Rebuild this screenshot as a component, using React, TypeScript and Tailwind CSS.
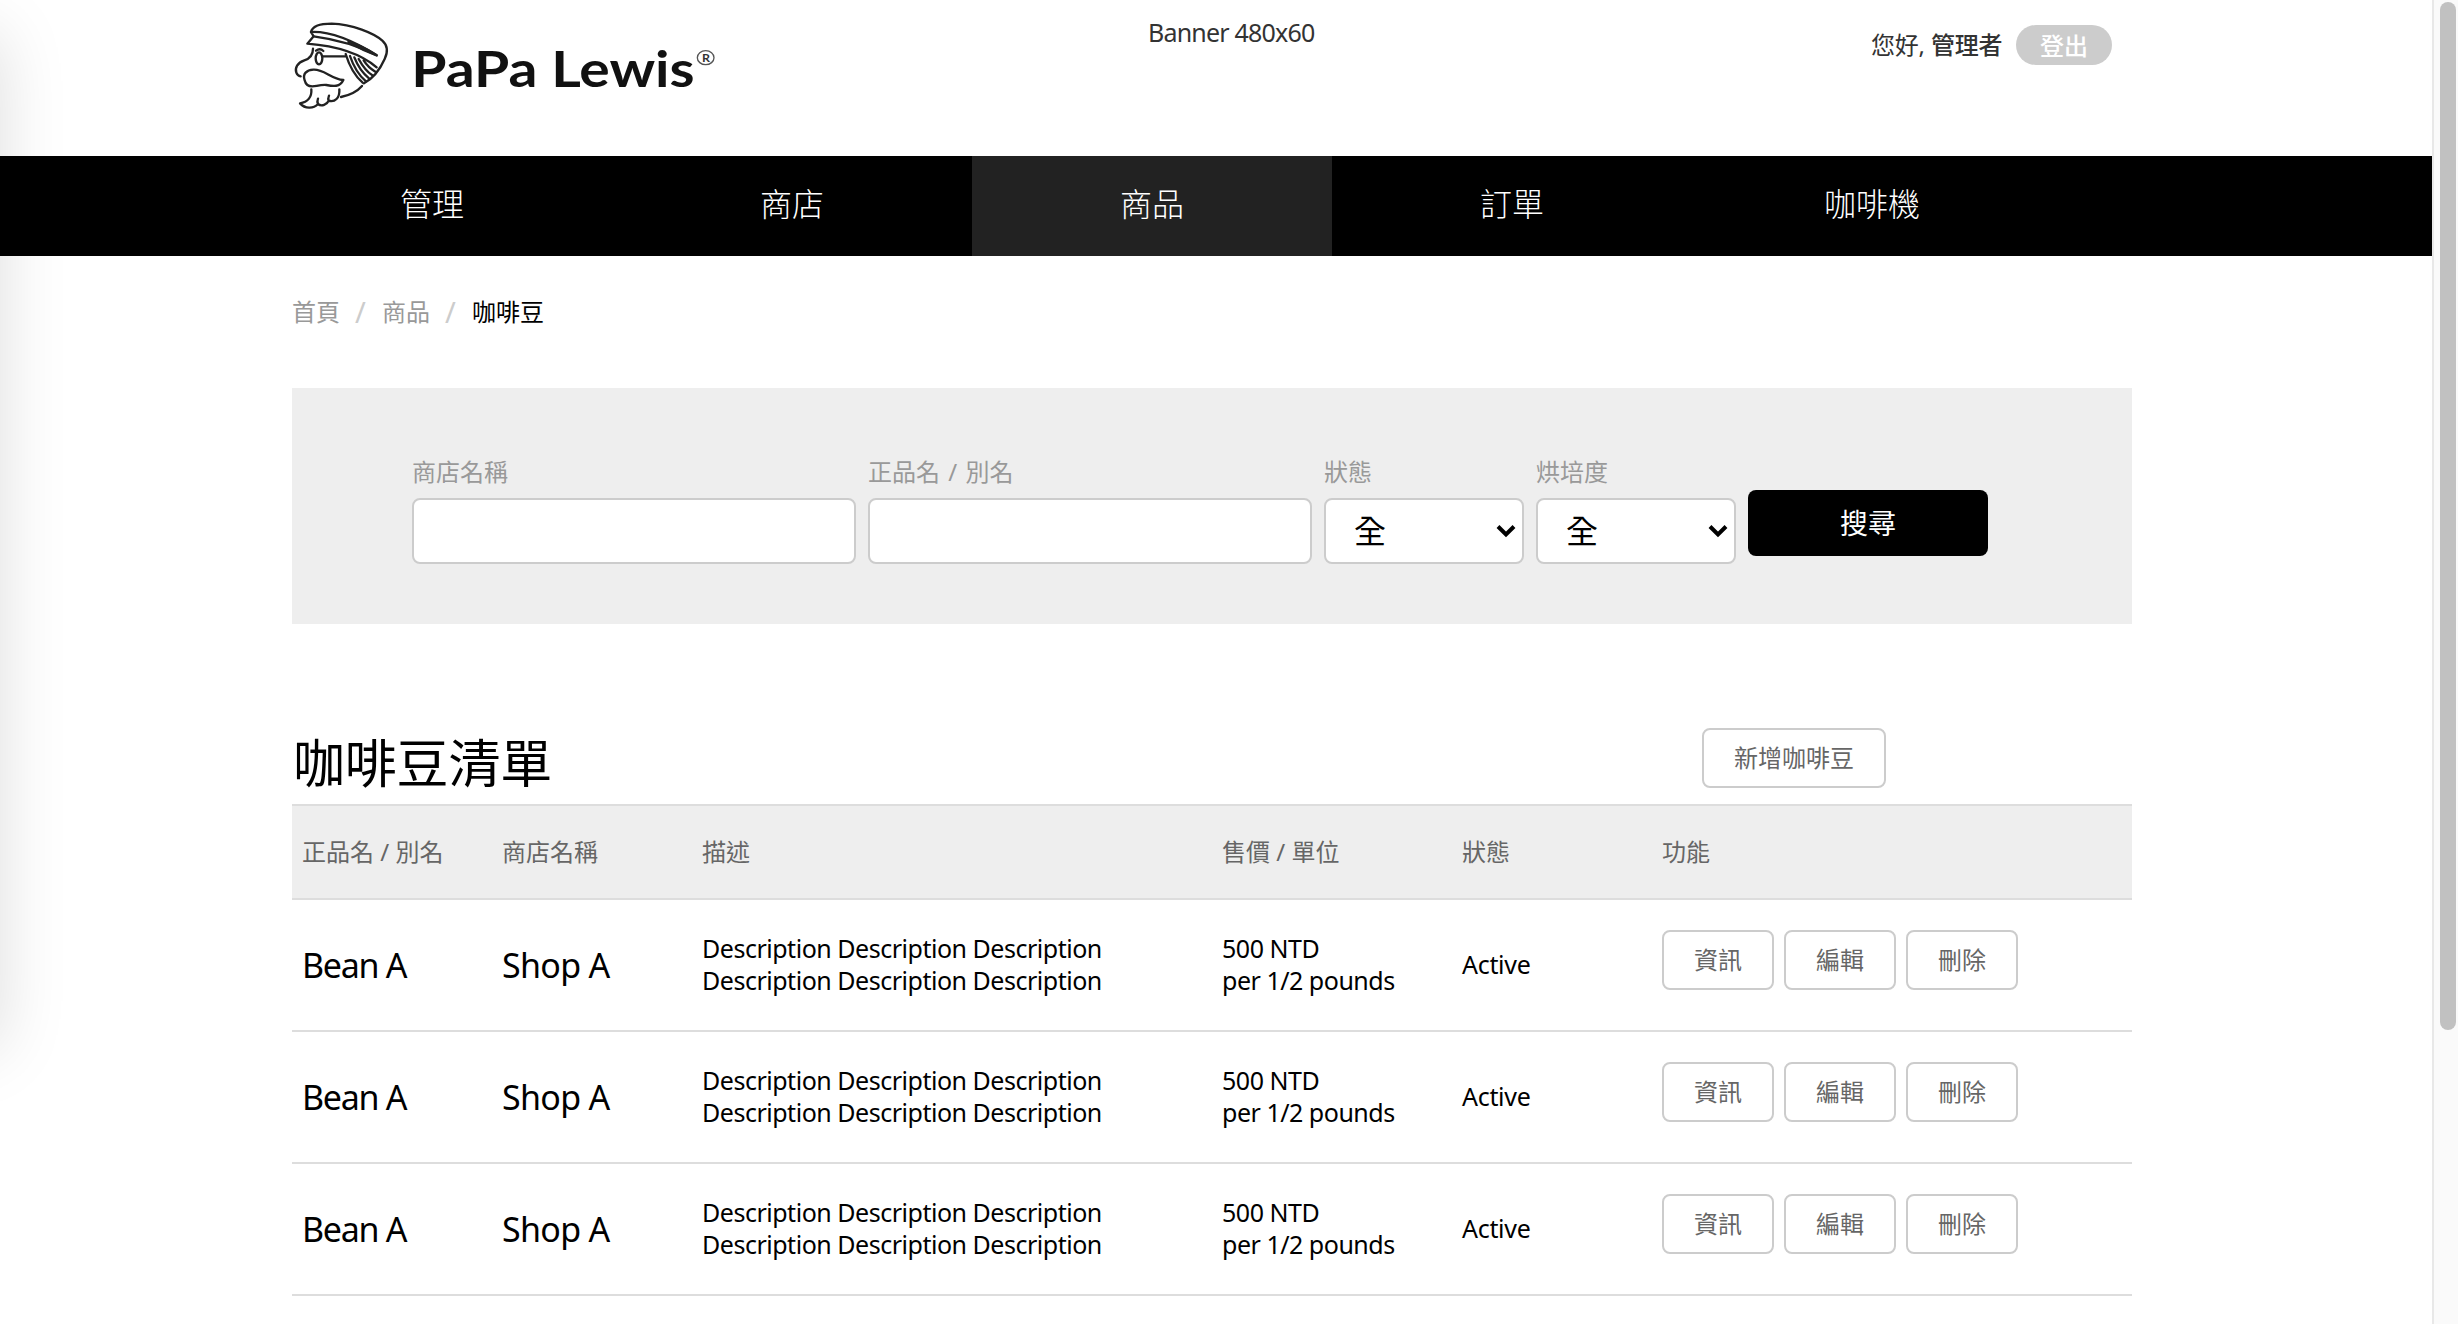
const ROWS = [0, 1, 2];
const COLS = 'grid grid-cols-[200px_200px_520px_240px_200px_480px] items-center [&>*]:pl-[10px]';
const FONT = "font-['Noto_Sans','Noto_Sans_CJK_TC',sans-serif]";
const CJK = "font-['Noto_Sans_CJK_TC',sans-serif]";

function Logo() {
  return (
    <svg width="450" height="110" viewBox="0 0 1350 330" className="block" aria-label="PaPa Lewis">
      <g fill="none" stroke="#222" strokeWidth="7" strokeLinecap="round" strokeLinejoin="round">
        <path d="M93 66 C97 49 116 41 155 41 C218 43 282 70 307 92 C325 108 324 126 314 147 C297 185 276 207 252 220" />
        <path d="M93 66 C138 64 204 82 290 136 C236 108 170 88 101 79 Z" />
        <path d="M205 96 C236 104 262 118 290 136 C262 126 236 114 205 96 Z" fill="#222" />
        <path d="M101 79 L82 101 C160 107 238 128 290 172" />
        <path d="M99 116 C99 134 91 145 73 151 C52 158 44 174 49 188 C52 196 56 198 62 199" />
        <ellipse cx="117" cy="145" rx="10" ry="18" />
        <path d="M108 122 Q120 113 130 123 M128 139 H196" />
        <path d="M197 132 C207 165 220 194 248 218 M210 138 C219 165 234 194 258 214 M223 142 C234 170 249 190 267 205 M236 147 C248 169 263 187 277 196 M251 151 C261 167 274 178 286 185" />
        <path d="M74 211 C67 191 80 180 100 179 C132 177 153 207 190 210 C180 232 160 229 139 225 C112 223 96 236 82 225 C77 221 75 216 74 211 Z" />
        <path d="M94 238 C96 261 83 276 60 280 C75 296 99 298 114 282 C125 291 141 283 146 272 C164 278 180 264 178 238 M114 282 C111 276 112 271 114 266 M146 272 C144 268 145 262 147 257" />
        <path d="M183 261 C207 256 232 244 246 228" />
      </g>
      <text x="394" y="230" fontSize="150" textLength="850" lengthAdjust="spacingAndGlyphs" fill="#111" className="font-['Lato'] font-bold">PaPa Lewis</text>
      <ellipse cx="1277" cy="143" rx="25" ry="21" fill="none" stroke="#555" strokeWidth="4" />
      <text x="1266" y="155" fontSize="32" textLength="24" lengthAdjust="spacingAndGlyphs" fill="#333" className="font-['Lato'] font-bold">R</text>
    </svg>
  );
}

function OutlineButton({ children, className = '' }: { children: string; className?: string }) {
  return (
    <button className={`h-[60px] rounded-lg border-2 border-[#ccc] bg-white pb-[2px] text-center text-[24px] leading-none text-[#666] ${CJK} ${className}`}>{children}</button>
  );
}

function Label({ children }: { children: string }) {
  return <div className="mb-[7px] h-[36px] text-[24px] leading-[34px] text-[#999] [word-spacing:2px]">{children}</div>;
}

function Select({ label }: { label: string }) {
  return (
    <div className="w-[200px]">
      <Label>{label}</Label>
      <div className={`flex h-[66px] items-center justify-between rounded-lg border-2 border-[#ccc] bg-white pr-[6px] pl-[28px] text-[32px] leading-none text-black ${CJK}`}>
        <span className="pb-[4px]">全</span>
        <svg width="20" height="14" viewBox="0 0 20 14"><path d="M2 2.5 L10 10.5 L18 2.5" fill="none" stroke="#000" strokeWidth="4" /></svg>
      </div>
    </div>
  );
}

export default function App() {
  return (
    <div className={`relative flex h-[1324px] w-[2458px] overflow-hidden bg-white text-black ${FONT}`}>
      <div className="absolute top-[34px] left-[-200px] h-[1014px] w-[200px] shadow-[0_0_64px_rgba(0,0,0,0.135)]" />
      <div className="relative w-[2432px]">
        <header className="flex h-[156px] items-start pl-[280px]">
          <div className="w-[868px] pt-[10px]"><Logo /></div>
          <div className="w-[723px] pt-[15px] text-[25px] leading-[34px] tracking-[-0.8px] text-[#333]">Banner 480x60</div>
          <div className="mt-[24px] flex items-center">
            <div className="w-[145px] text-[24px] leading-[41px] tracking-[-0.2px] whitespace-nowrap text-[#333]">您好, <span className="font-medium">管理者</span></div>
            <div className="h-[40px] w-[96px] rounded-full bg-[#ccc] text-center text-[24px] leading-[41px] font-medium text-white">登出</div>
          </div>
        </header>
        <nav className="flex h-[100px] bg-black pl-[252px]">
          {['管理', '商店', '商品', '訂單', '咖啡機'].map((t) => (
            <div key={t} className={`h-[100px] w-[360px] text-center text-[32px] leading-[93px] font-light text-white ${CJK} ${t === '商品' ? 'bg-[#222]' : ''}`}>{t}</div>
          ))}
        </nav>
        <main className="ml-[292px] w-[1840px]">
          <div className="flex h-[132px] pt-[36px] text-[24px] leading-[40px] text-[#999]">
            <span className="w-[62px]">首頁</span><span className="w-[28px] pl-[1px] text-[29px] text-[#ccc]">/</span>
            <span className="w-[62px]">商品</span><span className="w-[28px] pl-[1px] text-[29px] text-[#ccc]">/</span>
            <span className="text-black">咖啡豆</span>
          </div>
          <section className="flex h-[236px] gap-[12px] bg-[#eee] pt-[67px] pl-[120px]">
            <div className="w-[444px]"><Label>商店名稱</Label><div className="h-[66px] rounded-lg border-2 border-[#ccc] bg-white" /></div>
            <div className="w-[444px]"><Label>正品名 / 別名</Label><div className="h-[66px] rounded-lg border-2 border-[#ccc] bg-white" /></div>
            <Select label="狀態" />
            <Select label="烘培度" />
            <button className={`mt-[35px] h-[66px] w-[240px] rounded-lg bg-black pb-[2px] text-[28px] leading-none text-white ${CJK}`}>搜尋</button>
          </section>
          <div className="flex h-[180px] justify-between pt-[104px]">
            <h1 className={`-mt-[3px] pl-[1px] text-[52px] leading-[72px] tracking-[-0.2px] ${CJK}`}>咖啡豆清單</h1>
            <OutlineButton className="mr-[246px] w-[184px]">新增咖啡豆</OutlineButton>
          </div>
          <div className={`${COLS} h-[96px] border-y-2 border-[#ddd] bg-[#eee] text-[24px] text-[#666]`}>
            <div>正品名 / 別名</div><div>商店名稱</div><div>描述</div><div>售價 / 單位</div><div>狀態</div><div>功能</div>
          </div>
          {ROWS.map((r) => (
            <div key={r} className={`${COLS} h-[132px] border-b-2 border-[#ddd] text-[25px] leading-[32px] tracking-[-0.48px]`}>
              <div className="text-[34px] tracking-[-1.3px]">Bean A</div>
              <div className="text-[34px] tracking-[-0.7px]">Shop A</div>
              <div className="pb-[2px]">Description Description Description<br />Description Description Description</div>
              <div className="pb-[2px]">500 NTD<br />per 1/2 pounds</div>
              <div className="pb-[2px] tracking-[-0.3px]">Active</div>
              <div className="-mt-[10px] flex gap-[10px] tracking-normal">
                <OutlineButton className="w-[112px]">資訊</OutlineButton>
                <OutlineButton className="w-[112px]">編輯</OutlineButton>
                <OutlineButton className="w-[112px]">刪除</OutlineButton>
              </div>
            </div>
          ))}
        </main>
      </div>
      <aside className="relative w-[26px] border-l-2 border-[#e8e8e8] bg-[#fafafa] pt-[2px] pl-[6px]">
        <div className="h-[1028px] w-[16px] rounded-full bg-[#c1c1c1]" />
      </aside>
    </div>
  );
}
